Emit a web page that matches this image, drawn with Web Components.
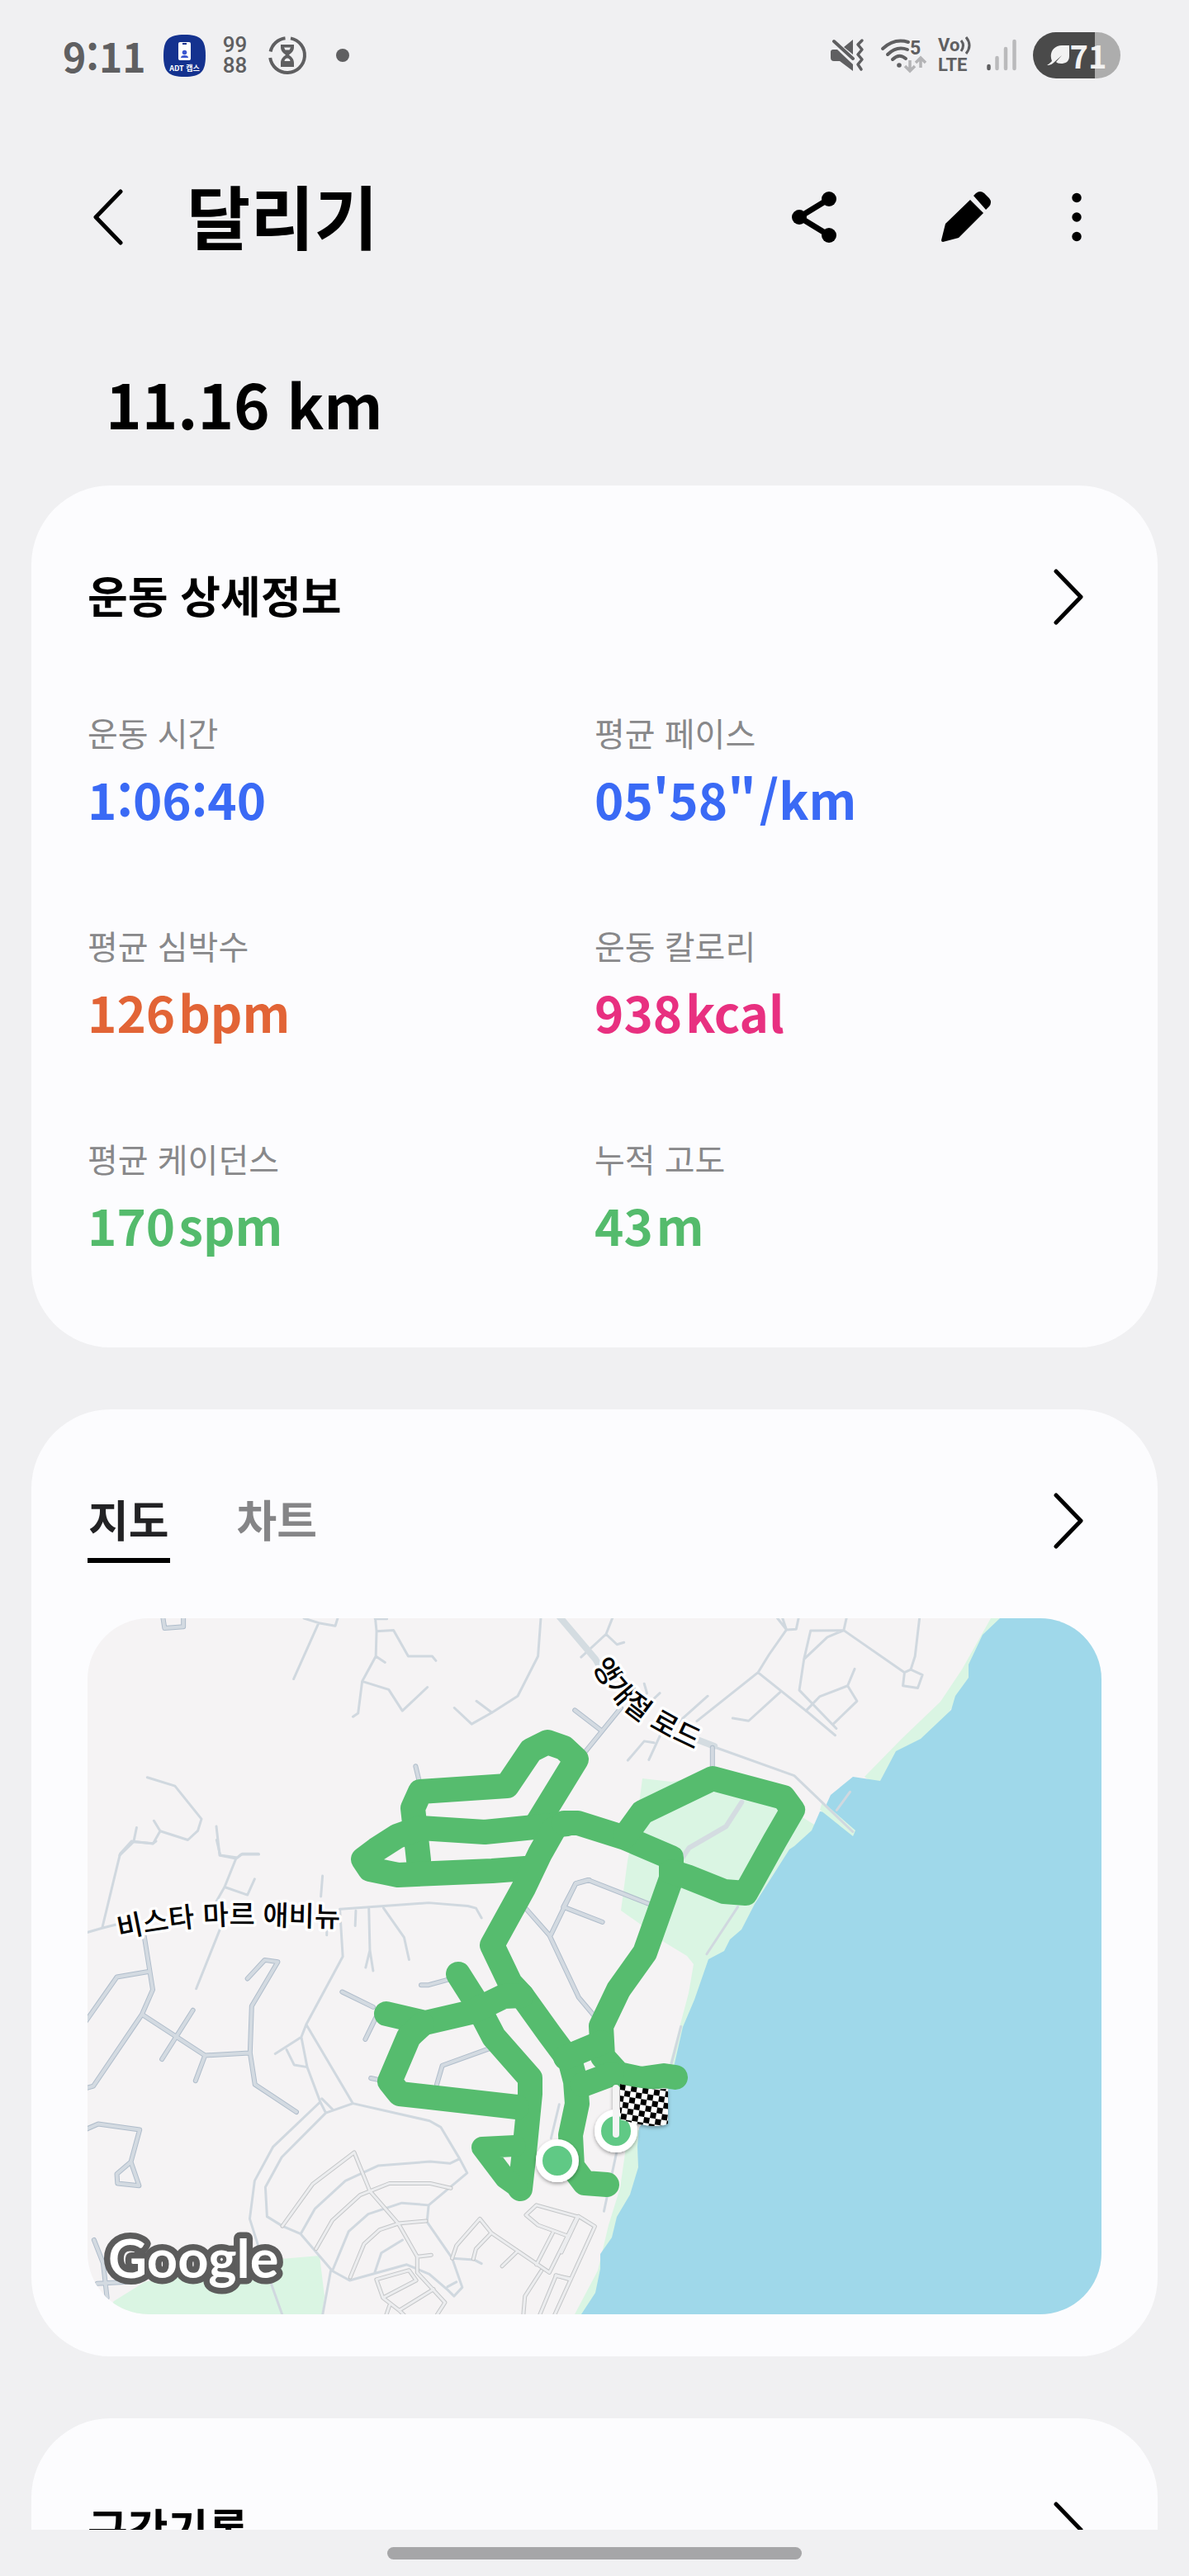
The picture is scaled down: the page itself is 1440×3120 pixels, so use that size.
<!DOCTYPE html>
<html lang="ko">
<head>
<meta charset="utf-8">
<meta name="viewport" content="width=device-width, initial-scale=1">
<title>달리기</title>
<style>
  html, body { margin: 0; background: #f0f0f2; }
  body { font-family: "Noto Sans CJK KR", sans-serif; color: #000; }
</style>
</head>
<body>
<run-app>
  <status-bar slot="status"></status-bar>
  <top-bar slot="status">달리기</top-bar>
  <total-distance>11.16 km</total-distance>
  <info-card>
    <h2 slot="title">운동 상세정보</h2>
    <metric-grid>
      <metric-item label="운동 시간" value="1:06:40" tone="time"></metric-item>
      <metric-item label="평균 페이스" value="05'58&quot;" unit="/km" tone="time"></metric-item>
      <metric-item label="평균 심박수" value="126" unit="bpm" tone="heart"></metric-item>
      <metric-item label="운동 칼로리" value="938" unit="kcal" tone="energy"></metric-item>
      <metric-item label="평균 케이던스" value="170" unit="spm" tone="motion"></metric-item>
      <metric-item label="누적 고도" value="43" unit="m" tone="motion"></metric-item>
    </metric-grid>
  </info-card>
  <info-card class="map">
    <view-tabs slot="title"></view-tabs>
    <run-map></run-map>
  </info-card>
  <info-card>
    <h2 slot="title">구간기록</h2>
  </info-card>
  <gesture-bar slot="footer"></gesture-bar>
</run-app>

<script>
const define = (name, html) => {
  const template = document.createElement('template');
  template.innerHTML = html;
  customElements.define(name, class extends HTMLElement {
    constructor() {
      super();
      this.attachShadow({ mode: 'open' }).append(template.content.cloneNode(true));
    }
  });
};

define('run-app', `
<style>
  :host { display: flex; flex-direction: column; height: 100vh; background: #f0f0f2; }
  main { flex: 1; min-height: 0; overflow: hidden; }
  ::slotted(info-card) { margin: 0 38px 75px; --head-bottom: 84px; }
  ::slotted(info-card.map) { --head-bottom: 67px; }
</style>
<slot name="status"></slot>
<main><slot></slot></main>
<slot name="footer"></slot>`);

define('status-bar', `
<style>
  :host { display: flex; justify-content: space-between; align-items: center; height: 134px; flex: none;
    padding: 0 83px 0 76px; box-sizing: border-box; color: #5f5f61; }
  div { display: flex; align-items: center; }
  svg { display: block; overflow: visible; }
  .time { font-size: 48px; line-height: 56px; font-weight: 700; margin-right: 21px; }
  .health { display: grid; width: 32px; margin: 0 24px 0 20px; font-family: Roboto, sans-serif; font-size: 26px; font-weight: 500; text-align: center; }
  .health span { line-height: 25px; }
  .dot { width: 16px; height: 16px; border-radius: 50%; background: #5f5f61; margin-left: 36px; }
  .volte { display: grid; width: 42px; margin: 0 17px 0 13px; font-family: Roboto, sans-serif; font-size: 22px; font-weight: 700; }
  .volte span { display: flex; align-items: center; line-height: 24px; }
  .battery { width: 106px; height: 56px; border-radius: 28px; margin-left: 20px; justify-content: center;
    background: linear-gradient(90deg, #4a4a4a 75px, #adadad 75px); color: #f2f2f2; font-size: 38px; line-height: 56px; font-weight: 700; }
</style>
<div>
  <span class="time">9:11</span>
  <svg width="51" height="51" viewBox="0 0 51 51" aria-label="ADT 캡스">
    <path d="M25.500 0C45 0 51 6 51 25.500S45 51 25.500 51 0 45 0 25.500 6 0 25.500 0Z" fill="#14328f"/>
    <rect x="18" y="9" width="15" height="22" rx="2" fill="#fff"/>
    <rect x="23" y="10" width="5" height="2" fill="#14328f"/>
    <circle cx="25.500" cy="21.500" r="2.800" fill="#3b56cf"/>
    <path d="M21 28q0-3 4.500-3t4.500 3z" fill="#3b56cf"/>
    <text x="25.500" y="44" text-anchor="middle" font-size="9" font-weight="700" fill="#fff">ADT 캡스</text>
  </svg>
  <div class="health"><span>99</span><span>88</span></div>
  <svg width="46" height="46" viewBox="0 0 46 46">
    <path d="M27 2.400A21 21 0 1 1 2.200 26M2.600 18.500A21 21 0 0 1 20.500 2.200" fill="none" stroke="#5f5f61" stroke-width="4"/>
    <path d="M15 10h16v3c0 5-3 7-6 9.500 3 2.500 6 4.500 6 10V37H15v-4.500c0-5.500 3-7.500 6-10-3-2.500-6-4.500-6-9.500z" fill="#5f5f61"/>
    <path d="M19 13.500h8l-1.500 3h-5zM19.500 30c0-2 2-3.500 3.500-3.500s3.500 1.500 3.500 3.500z" fill="#f0f0f2"/>
  </svg>
  <span class="dot"></span>
</div>
<div>
  <svg width="40" height="40" viewBox="0 0 40 40">
    <path d="M0 16q0-3 3-3h5L27 31v8L11 27H4q-4 0-4-4zM16 10 27 1v18z" fill="#5f5f61"/>
    <path d="M4 3 27 24" stroke="#5f5f61" stroke-width="4" stroke-linecap="round"/>
    <path d="M38 2l-5 5 5 6-5 6 5 6-5 6 4 6" fill="none" stroke="#5f5f61" stroke-width="3.500" stroke-linecap="round" stroke-linejoin="round"/>
  </svg>
  <svg width="56" height="42" viewBox="0 0 56 42" style="margin-left:21px">
    <g fill="none" stroke="#5f5f61" stroke-width="4" stroke-linecap="round">
      <path d="M2 13Q16 0 33 5M8 20Q19 9 32 14M14 26q8-8 16-1"/>
    </g>
    <circle cx="22" cy="33" r="2.800" fill="#5f5f61"/>
    <path d="M35 27v13m-6-6 6 6 6-6M48 36V24m-6 6 6-6 6 6" fill="none" stroke="#b4b4b6" stroke-width="3.500"/>
    <text x="35" y="20" font-size="23" font-weight="700" fill="#5f5f61" font-family="Roboto, sans-serif">5</text>
  </svg>
  <div class="volte">
    <span>Vo<svg width="15" height="22" viewBox="0 0 15 22"><path d="M2 5q5 6 0 13M8 1q8 10 0 20" fill="none" stroke="#5f5f61" stroke-width="3"/></svg></span>
    <span>LTE</span>
  </div>
  <svg width="36" height="40" viewBox="0 0 36 40">
    <g stroke-width="4.500" stroke-linecap="round" stroke="#bababc">
      <path d="M2.500 33v3" stroke="#5f5f61"/><path d="M12.500 23v13M23 12v24M33.500 3v33"/>
    </g>
  </svg>
  <div class="battery">
    <svg width="28" height="26" viewBox="0 0 28 26"><path d="M27 1v13c0 7-5 9-10 9-3 0-5-1-6-2l7-8-10 9c-2 2-5 3-8 3 2-1 4-3 6-5C2 10 8 1 18 1z" fill="#f2f2f2"/></svg>
    <span>71</span>
  </div>
</div>`);

define('top-bar', `
<style>
  :host { display: flex; align-items: center; height: 258px; flex: none; padding: 0 116px 0 106px; box-sizing: border-box; }
  h1 { flex: 1; margin: 0; padding-bottom: 6px; font-size: 84px; line-height: 100px; font-weight: 700; }
  nav { display: flex; gap: 44px; }
  button { display: flex; justify-content: center; align-items: center; width: 140px; height: 96px; padding: 0; border: 0; background: none; }
  .back { width: 50px; margin-right: 70px; }
  .more { width: 40px; }
</style>
<button class="back" aria-label="뒤로">
  <svg width="36" height="68" viewBox="0 0 36 68"><path d="M33 3 3 34l30 31" fill="none" stroke="#000" stroke-width="5" stroke-linecap="round" stroke-linejoin="round"/></svg>
</button>
<h1><slot></slot></h1>
<nav>
  <button aria-label="공유">
    <svg width="54" height="62" viewBox="0 0 54 62"><path d="M45 9 9 31l36 22" fill="none" stroke="#000" stroke-width="7"/><circle cx="45" cy="9" r="9"/><circle cx="9" cy="31" r="9"/><circle cx="45" cy="53" r="9"/></svg>
  </button>
  <button aria-label="편집">
    <svg width="60" height="62" viewBox="0 0 60 62"><path d="M35 10 51 26 21 56 2 61q-2 0-2-2L5 39zM39 5l3-3q5-4 10 0l6 6q4 5 0 10l-4 4z"/></svg>
  </button>
  <button class="more" aria-label="더보기">
    <svg width="12" height="60" viewBox="0 0 12 60"><circle cx="6" cy="6.500" r="5.700"/><circle cx="6" cy="30" r="5.700"/><circle cx="6" cy="53.500" r="5.700"/></svg>
  </button>
</nav>`);

define('total-distance', `
<style>
  :host { display: flex; align-items: center; height: 192px; padding: 0 0 4px 128px; font-size: 74px; line-height: 100px; font-weight: 700; }
</style>
<slot></slot>`);

define('info-card', `
<style>
  :host { display: block; background: #fcfcfe; border-radius: 96px; padding: 0 68px; }
  header { display: flex; align-items: flex-start; justify-content: space-between; height: 102px; padding: 84px 0 var(--head-bottom); }
  ::slotted(h2) { margin: 0; font-size: 53px; line-height: 96px; font-weight: 700; }
  button { display: flex; justify-content: center; align-items: center; width: 80px; height: 102px; padding: 0; border: 0; background: none; }
</style>
<header>
  <slot name="title"></slot>
  <button aria-label="자세히">
    <svg width="36" height="68" viewBox="0 0 36 68"><path d="M3 3 33 34 3 65" fill="none" stroke="#000" stroke-width="5" stroke-linecap="round" stroke-linejoin="round"/></svg>
  </button>
</header>
<slot></slot>`);

define('metric-grid', `
<style>
  :host { display: grid; grid-template-columns: 1fr 1fr; row-gap: 98px; padding-bottom: 98px; }
</style>
<slot></slot>`);

customElements.define('metric-item', class extends HTMLElement {
  constructor() {
    super();
    this.attachShadow({ mode: 'open' }).innerHTML = `
      <style>
        :host { display: block; }
        :host([tone="time"]) { --tone: #3a6af5; }
        :host([tone="heart"]) { --tone: #e26436; }
        :host([tone="energy"]) { --tone: #e83080; }
        :host([tone="motion"]) { --tone: #54bb6c; }
        dl, dt, dd { margin: 0; }
        dt { font-size: 40px; line-height: 58px; color: #88888a; }
        dd { display: flex; gap: 4px; font-size: 60px; line-height: 102px; font-weight: 700; color: var(--tone); }
      </style>
      <dl><dt></dt><dd><span class="value"></span><span class="unit"></span></dd></dl>`;
  }
  connectedCallback() {
    const find = s => this.shadowRoot.querySelector(s);
    find('dt').textContent = this.getAttribute('label');
    find('.value').textContent = this.getAttribute('value');
    find('.unit').textContent = this.getAttribute('unit') || '';
  }
});

define('view-tabs', `
<style>
  :host { display: flex; gap: 80px; }
  button { font: inherit; font-size: 53px; line-height: 96px; font-weight: 700; padding: 0 1px; border: 0; border-bottom: 6px solid transparent; background: none; color: #858587; }
  button[aria-selected="true"] { color: #222224; border-color: #000; }
</style>
<button role="tab" aria-selected="true">지도</button>
<button role="tab" aria-selected="false">차트</button>`);

/* The street map is split in four quarters; each has its own survey grid. */
define('run-map', `
<style>
  :host { display: block; padding-bottom: 51px; }
  svg { display: block; width: 100%; height: auto; border-radius: 74px; background: #f5f3f4; }
  .thin, .case, .lane, .plot, .plotfill, .main { fill: none; stroke-linejoin: round; stroke-linecap: round; }
  .grid path { vector-effect: non-scaling-stroke; }
  .thin { stroke: #d0d8df; stroke-width: 3; }
  .case { stroke: #b0bdcb; stroke-width: 6; }
  .lane { stroke: #d3dae1; stroke-width: 4; }
  .plot { stroke: #c4c6c8; stroke-width: 5; }
  .plotfill { stroke: #ecedef; stroke-width: 3; }
  .main { stroke: #d4dce1; stroke-width: 8; }
  .road { font-size: 34px; font-weight: 500; stroke: #fff; stroke-width: 7; stroke-linejoin: round; paint-order: stroke; }
  .logo { font-family: Lato, sans-serif; font-size: 65px; font-weight: 700; fill: #fff; stroke: #5c5c5c; stroke-width: 15; stroke-linejoin: round; paint-order: stroke; }
</style>
<svg viewBox="0 0 1228 843" role="img" aria-label="달리기 경로 지도">
  <defs>
    <path id="angel" d="M611 56 Q630 95 659 117 Q695 143 751 166"/>
    <path id="vista" d="M38 388 Q120 370 192 371 Q250 373 324 374"/>
    <pattern id="check" width="14" height="14" patternUnits="userSpaceOnUse" patternTransform="translate(645 564) rotate(9)">
      <rect width="14" height="14" fill="#fff"/><path d="M0 0h7v7H0zM7 7h7v7H7z"/>
    </pattern>
    <filter id="shade" x="-50%" y="-50%" width="200%" height="200%"><feDropShadow dx="0" dy="2" stdDeviation="2" flood-opacity=".35"/></filter>
    <g id="streets" class="grid">
      <g transform="matrix(.3954 0 0 .3827 -6 270)">
        <path d="M188 295 215 470 182 548 33 775 10 782M205 412 105 430 10 570M182 548 375 678 510 670M338 535 243 690M375 678 346 758M505 435 558 376 598 382 518 522 513 670 528 770 655 857M10 912 48 895 175 913 148 1015 105 1053 107 1083 173 1090 148 1015M35 1262 63 1335 75 1445M45 1400 140 1395M795 477 890 525M900 555 866 627M1037 455H1060L1120 438M883 750 905 755M1085 770 1102 710 1250 655M1355 210 1430 298 1520 495 1565 550M1435 295 1510 135 1552 123"/>
      </g>
      <g transform="matrix(.4592 0 0 .4082 574 270)">
        <path d="M5 195 38 125 70 115 235 188M5 195 108 240"/>
      </g>
      <g transform="matrix(.4464 0 0 .3571 -66 -270)">
        <path d="M352 750 357 790 408 785V750M1470 1068 1540 1135M1038 1258 1048 1310"/>
      </g>
      <g transform="matrix(.4719 0 0 .3571 594 -270)">
        <path d="M18 1210 110 1060M345 1195V1260"/>
      </g>
    </g>
    <g id="blocks" class="grid">
      <g transform="matrix(.3954 0 0 .3827 -6 270)">
        <path d="M612 1218 705 1085 832 985 880 1107 967 1210 1025 1315V1365L1110 1460 1085 1500M715 1290 765 1200 850 1120 940 1083H1065L1128 1098M820 1380 862 1275 910 1230 967 1210 1052 1202M1025 1315 1068 1310M900 1387 1000 1358 1022 1390 920 1445ZM920 1445 970 1485 1075 1418M940 1470 930 1500M970 1485 985 1500M1132 1320 1145 1280 1217 1195 1252 1240 1430 1365M1252 1240 1205 1290 1197 1322M1285 1345 1330 1300M1515 1188 1390 1152 1358 1183 1395 1215 1480 1247M1515 1188 1430 1365M1440 1240 1390 1340M1405 1360 1355 1440 1350 1500M1400 1500 1450 1375 1495 1385"/>
      </g>
      <g transform="matrix(.4592 0 0 .4082 574 270)">
        <path d="M45 1113 88 1143-20 1410M45 1113 0 1220M20 1300-15 1288"/>
      </g>
    </g>
  </defs>

  <g fill="#daf5e3">
    <path d="M1094 0 1059 62 1033 101 986 146 941 192 975 215 1120 0Z"/>
    <path d="M672 194 707 198 757 190 840 225 877 248 900 262 840 300 800 420 740 520 705 580V539L716 499 728 454 734 419 726 409 698 392 666 368 646 354 654 294 669 217Z"/>
    <path d="M655 620 645 690 631 735 618 790 590 843H625L690 620Z"/>
    <path d="M20 843 32 827 69 804 152 783 281 772 287 821 284 843Z"/>
  </g>
  <path fill="#9fd8ea" d="M1105 0 1084 20 1067 56V72L1051 94 1046 111 1009 146 979 161 960 197 927 192 900 214 895 225 896 235 887 234 877 257 856 276 850 280 808 346 792 377 778 389 771 403 752 413 735 462 721 495 711 539 703 572 668 617 666 640 667 665 657 698 641 725 635 750 621 770V788L615 817 598 843H1228V0Z"/>
  <path d="M890 222 930 257 927 264 887 232Z" fill="#daf5e3"/>

  <g class="thin grid">
    <g transform="matrix(.4464 0 0 .3571 -66 -270)">
      <path d="M735 756 775 772 820 782 828 750M775 772 707 962M928 750 932 800 930 885 893 970 882 1078 868 1090M932 800 978 797 1018 885H1083L1093 900M930 885 955 906M893 970 965 998 1002 1070 1070 990M928 758H960M1378 750 1370 885 1315 1020 1245 1076 1190 1115 1143 1060M1203 1037 1245 1076M310 1296 385 1325 457 1437 447 1477 420 1508 345 1478 328 1443M345 1478 326 1520 273 1514 235 1560M273 1514 281 1466M498 1508 508 1560 555 1568 568 1555H612"/>
    </g>
    <g transform="matrix(.4719 0 0 .3571 594 -270)">
      <path d="M90 750 72 810 8 888M72 810 100 845 118 838M512 756 535 795 560 793 567 750M525 756 535 795 490 880 462 940 305 1105M462 940 590 1075 660 1153M518 1008 438 1104 397 1095M690 750 682 797 597 798 580 895 568 1000 663 1130M682 797 640 820 580 895M682 797 838 940 834 985 872 993 884 948 854 930 838 940M877 750 865 885 854 930M585 1070 620 1022 692 985 710 928M692 985 716 1037 655 1115M333 1020 250 1118M340 1188 555 1290 705 1480M664 1407 698 1345M170 978 177 1010 165 1030M210 1010 190 1035M128 1238 170 1173 195 1178M212 1150 182 1236"/>
    </g>
    <g transform="matrix(.3954 0 0 .3827 -6 270)">
      <path d="M150 0 115 40 60 275 10 290M150 0 215 8 225 0M422 45 470 55 485 42H540M470 55 435 145 410 190M435 145 505 170 527 120M60 275 110 262M430 255 348 467M735 110 730 175M790 215 1060 195 1180 205 1205 212 1222 243M788 215 797 365 685 580 670 620 590 673M837 220 835 268M877 215 880 345 867 400M880 345 890 410M922 212 985 305 1000 375M748 280V297M685 580 828 830 1063 885 1097 905 1155 1005 1178 1050 1060 1152 1055 1205 1132 1320 1163 1412 1138 1440 1118 1420 1062 1370 993 1340 818 1390 765 1360 668 1243 612 1218 565 1188 560 1095 610 1000 745 860 828 830M670 620 688 715 728 825 583 968 527 1075 512 1195 550 1320 612 1500M728 825 745 860M733 815 765 848M625 660 648 708 688 715M668 1243 712 1163 805 1075 905 1027 1065 1014 1125 1020 1155 1005M765 1360 815 1235 875 1180 978 1145 1060 1152M895 1365 915 1303 980 1262M760 1360 735 1500M1132 1320 1200 1325 1222 1337M1460 833 1435 940M1118 1410 1145 1395"/>
    </g>
    <g transform="matrix(.4592 0 0 .4082 574 270)">
      <path d="M465 195 383 335M315 550 290 660M145 925 112 1098"/>
    </g>
    <path d="M156 252 160 287"/>
  </g>
  <g class="main grid">
    <g transform="matrix(.4719 0 0 .3571 594 -270)">
      <path d="M-48 750 45 895 60 930M310 1170 350 1190"/>
      <path d="M420 1380 380 1462 285 1535 262 1580" stroke-width="6"/>
    </g>
  </g>
  <use href="#streets" class="case"/>
  <use href="#streets" class="lane"/>
  <use href="#blocks" class="plot"/>
  <use href="#blocks" class="plotfill"/>

  <g fill="none" stroke="#56bc6e" stroke-width="30" stroke-linejoin="round" stroke-linecap="round">
    <path d="M401 293 394 230 403 210 508 203 537 160 557 150 577 157 592 171 543 251"/>
    <path d="M581 249 481 259 403 254 375 264 350 280 334 292 342 304 376 311 490 306 530 303"/>
    <path d="M565 255 548 285 528 327 490 396 512 442 526 457 559 503 585 538 591 561 593 588 585 626 587 664 602 684 629 686"/>
    <path d="M577 248 594 248 651 266 707 290V315L675 405 643 450 622 494 624 531 643 552 670 558 698 554 712 556"/>
    <path d="M707 307 726 313 771 331 797 333 832 270 854 232 843 217 757 194 672 235 651 264"/>
    <path d="M449 431 468 461 492 507 536 557 536 576 530 637 524 691"/>
    <path d="M362 479 409 490 465 477 504 458 526 457"/>
    <path d="M405 492 389 507 366 561 378 576 520 592"/>
    <path d="M579 532 622 514M600 565 635 552"/>
    <path d="M518 639 478 641 506 678 520 688" stroke-width="26"/>
  </g>

  <g filter="url(#shade)">
    <circle cx="569" cy="657" r="22" fill="#60c985" stroke="#fff" stroke-width="8"/>
    <circle cx="640" cy="621" r="22" fill="#60c985" stroke="#fff" stroke-width="8"/>
    <path d="M645 564Q675 572 703 570V612Q690 620 645 607Z" fill="url(#check)"/>
    <path d="M640 569V625" stroke="#f4f4f4" stroke-width="8" stroke-linecap="round"/>
  </g>

  <text class="road"><textPath href="#angel">앵개절 로드</textPath></text>
  <text class="road"><textPath href="#vista">비스타 마르 애비뉴</textPath></text>
  <text class="logo" x="25" y="799">Google</text>
</svg>`);

define('gesture-bar', `
<style>
  :host { display: flex; justify-content: center; align-items: center; flex: none; height: 56px; }
  span { width: 502px; height: 15px; border-radius: 8px; background: #a6a6a8; }
</style>
<span></span>`);
</script>
</body>
</html>
